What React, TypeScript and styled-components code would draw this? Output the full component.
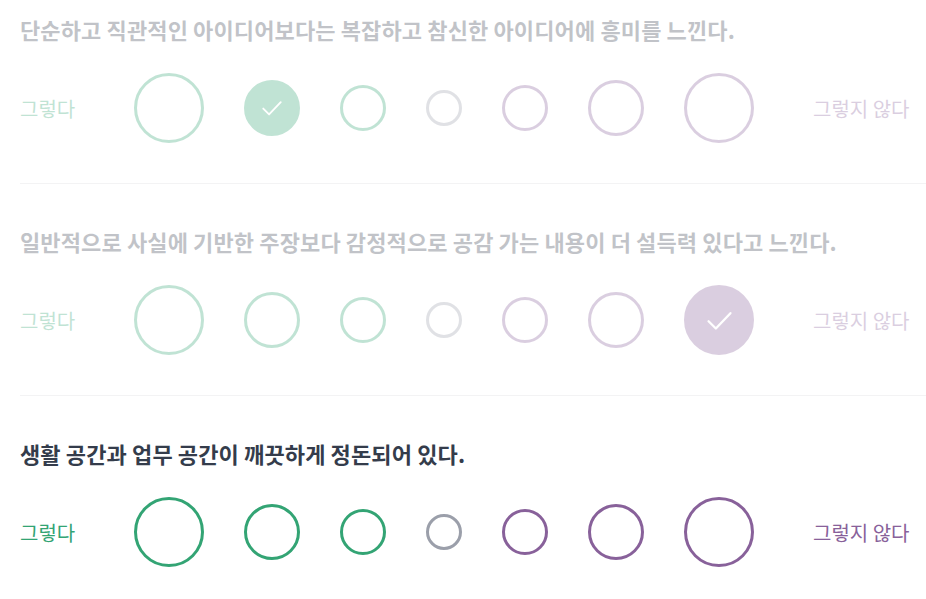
import React from "react"
import styled, { createGlobalStyle } from "styled-components"

const GlobalStyle = createGlobalStyle`
  html, body {
    margin: 0;
    padding: 0;
    background: #ffffff;
  }
  body {
    font-family: "Noto Sans CJK KR", "Noto Sans", sans-serif;
  }
`

const GREEN = "#33a474"
const PURPLE = "#88619a"
const NEUTRAL = "#9b9faa"

const Page = styled.div`
  width: 926px;
  padding: 0 0 0 20px;
  box-sizing: border-box;
`

const Section = styled.section<{ $first?: boolean; $last?: boolean }>`
  padding: ${p => (p.$first ? "16px" : "44px")} 0 40px;
  border-bottom: ${p => (p.$last ? "none" : "1px solid #f3f3f4")};
`

const Inner = styled.div<{ $faded: boolean }>`
  opacity: ${p => (p.$faded ? 0.3 : 1)};
`

const Question = styled.div`
  font-size: 22px;
  font-weight: 700;
  line-height: 26px;
  letter-spacing: 0.12px;
  color: #343c4b;
  margin-bottom: 31px;
  white-space: nowrap;
`

const Row = styled.div`
  display: flex;
  align-items: center;
  height: 70px;
`

const Label = styled.span<{ $color: string }>`
  font-size: 20px;
  color: ${p => p.$color};
  white-space: nowrap;
`

const AgreeLabel = styled(Label)`
  width: 114px;
  flex-shrink: 0;
`

const DisagreeLabel = styled(Label)`
  margin-left: 59px;
`

const Options = styled.div`
  display: flex;
  align-items: center;
  gap: 40px;
`

const Circle = styled.div<{ $size: number; $color: string; $checked: boolean }>`
  width: ${p => p.$size}px;
  height: ${p => p.$size}px;
  box-sizing: border-box;
  border-radius: 50%;
  border: 3px solid ${p => p.$color};
  background: ${p => (p.$checked ? p.$color : "transparent")};
  display: flex;
  align-items: center;
  justify-content: center;
  flex-shrink: 0;
`

const sizes = [70, 56, 46, 36, 46, 56, 70]
const colors = [GREEN, GREEN, GREEN, NEUTRAL, PURPLE, PURPLE, PURPLE]

const Check: React.FC<{ size: number }> = ({ size }) => (
  <svg width={size} height={size} viewBox="0 0 24 24" fill="none">
    <path
      d="M4.5 12.5l5 5L19.5 7"
      stroke="#fff"
      strokeWidth="1.6"
      strokeLinecap="round"
      strokeLinejoin="round"
    />
  </svg>
)

const questions = [
  { text: "단순하고 직관적인 아이디어보다는 복잡하고 참신한 아이디어에 흥미를 느낀다.", answer: 1, faded: true },
  { text: "일반적으로 사실에 기반한 주장보다 감정적으로 공감 가는 내용이 더 설득력 있다고 느낀다.", answer: 6, faded: true },
  { text: "생활 공간과 업무 공간이 깨끗하게 정돈되어 있다.", answer: -1, faded: false },
]

export default function App() {
  return (
    <>
      <GlobalStyle />
      <Page>
        {questions.map((q, qi) => (
          <Section key={qi} $first={qi === 0} $last={qi === questions.length - 1}>
            <Inner $faded={q.faded}>
              <Question>{q.text}</Question>
              <Row>
                <AgreeLabel $color={GREEN}>그렇다</AgreeLabel>
                <Options>
                  {sizes.map((s, i) => (
                    <Circle key={i} $size={s} $color={colors[i]} $checked={q.answer === i}>
                      {q.answer === i && <Check size={Math.round(s * 0.5)} />}
                    </Circle>
                  ))}
                </Options>
                <DisagreeLabel $color={PURPLE}>그렇지 않다</DisagreeLabel>
              </Row>
            </Inner>
          </Section>
        ))}
      </Page>
    </>
  )
}
